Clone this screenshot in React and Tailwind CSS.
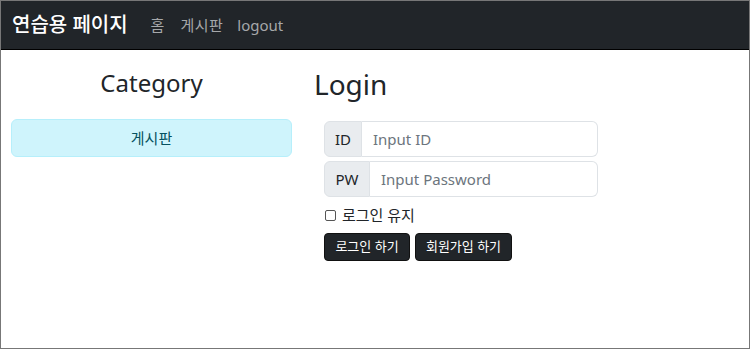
export default function App() {
  const font = { fontFamily: '"Noto Sans", "Noto Sans CJK KR", sans-serif' };
  return (
    <div className="w-[750px] h-[349px] border border-[#777777] bg-white overflow-hidden flex flex-col" style={font}>
      <nav className="h-[49px] shrink-0 bg-[#212529] border-b border-black flex items-center pl-[11px]">
        <span className="text-white text-[20px] leading-none font-medium">연습용 페이지</span>
        <div className="flex items-center ml-[23px] text-[15px] leading-none text-[#a6a8aa]">
          <span>홈</span>
          <span className="ml-[16px] tracking-[0.5px]">게시판</span>
          <span className="ml-[14px]">logout</span>
        </div>
      </nav>
      <div className="flex">
        <div className="w-[301px] shrink-0 pl-[10px] pr-[10px] pt-[17px] flex flex-col">
          <h2 className="text-center text-[24px] leading-[32px] text-[#212529]">Category</h2>
          <div className="mt-[20px] h-[38px] rounded-[6px] border border-[#b6effb] bg-[#cff4fc] text-[#055160] text-[15px] flex items-center justify-center">
            게시판
          </div>
        </div>
        <div className="flex-1 pl-[12px] pt-[16px]">
          <h1 className="text-[28px] leading-[36px] text-[#212529]">Login</h1>
          <div className="ml-[10px] mt-[19px] w-[274px] flex flex-col gap-[4px]">
            <div className="flex h-[36px]">
              <div className="w-[38px] bg-[#e9ecef] border border-[#dee2e6] rounded-l-[6px] flex items-center justify-center text-[15px] text-[#212529]">ID</div>
              <div className="flex-1 border border-l-0 border-[#dee2e6] rounded-r-[6px] flex items-center pl-[11px] text-[15px] text-[#6c757d]">Input ID</div>
            </div>
            <div className="flex h-[36px]">
              <div className="w-[46px] bg-[#e9ecef] border border-[#dee2e6] rounded-l-[6px] flex items-center justify-center text-[15px] text-[#212529]">PW</div>
              <div className="flex-1 border border-l-0 border-[#dee2e6] rounded-r-[6px] flex items-center pl-[11px] text-[15px] text-[#6c757d]">Input Password</div>
            </div>
            <label className="flex items-center mt-[3px] h-[22px] text-[15px] text-[#212529]">
              <span className="w-[11px] h-[11px] border border-[#555] rounded-[2px] mr-[6px] ml-[1px]"></span>
              로그인 유지
            </label>
            <div className="flex gap-[5px] mt-[3px]">
              <button className="h-[28px] w-[86px] rounded-[4px] bg-[#212529] border border-[#111] text-white text-[13px]">로그인 하기</button>
              <button className="h-[28px] w-[97px] rounded-[4px] bg-[#212529] border border-[#111] text-white text-[13px]">회원가입 하기</button>
            </div>
          </div>
        </div>
      </div>
    </div>
  );
}
